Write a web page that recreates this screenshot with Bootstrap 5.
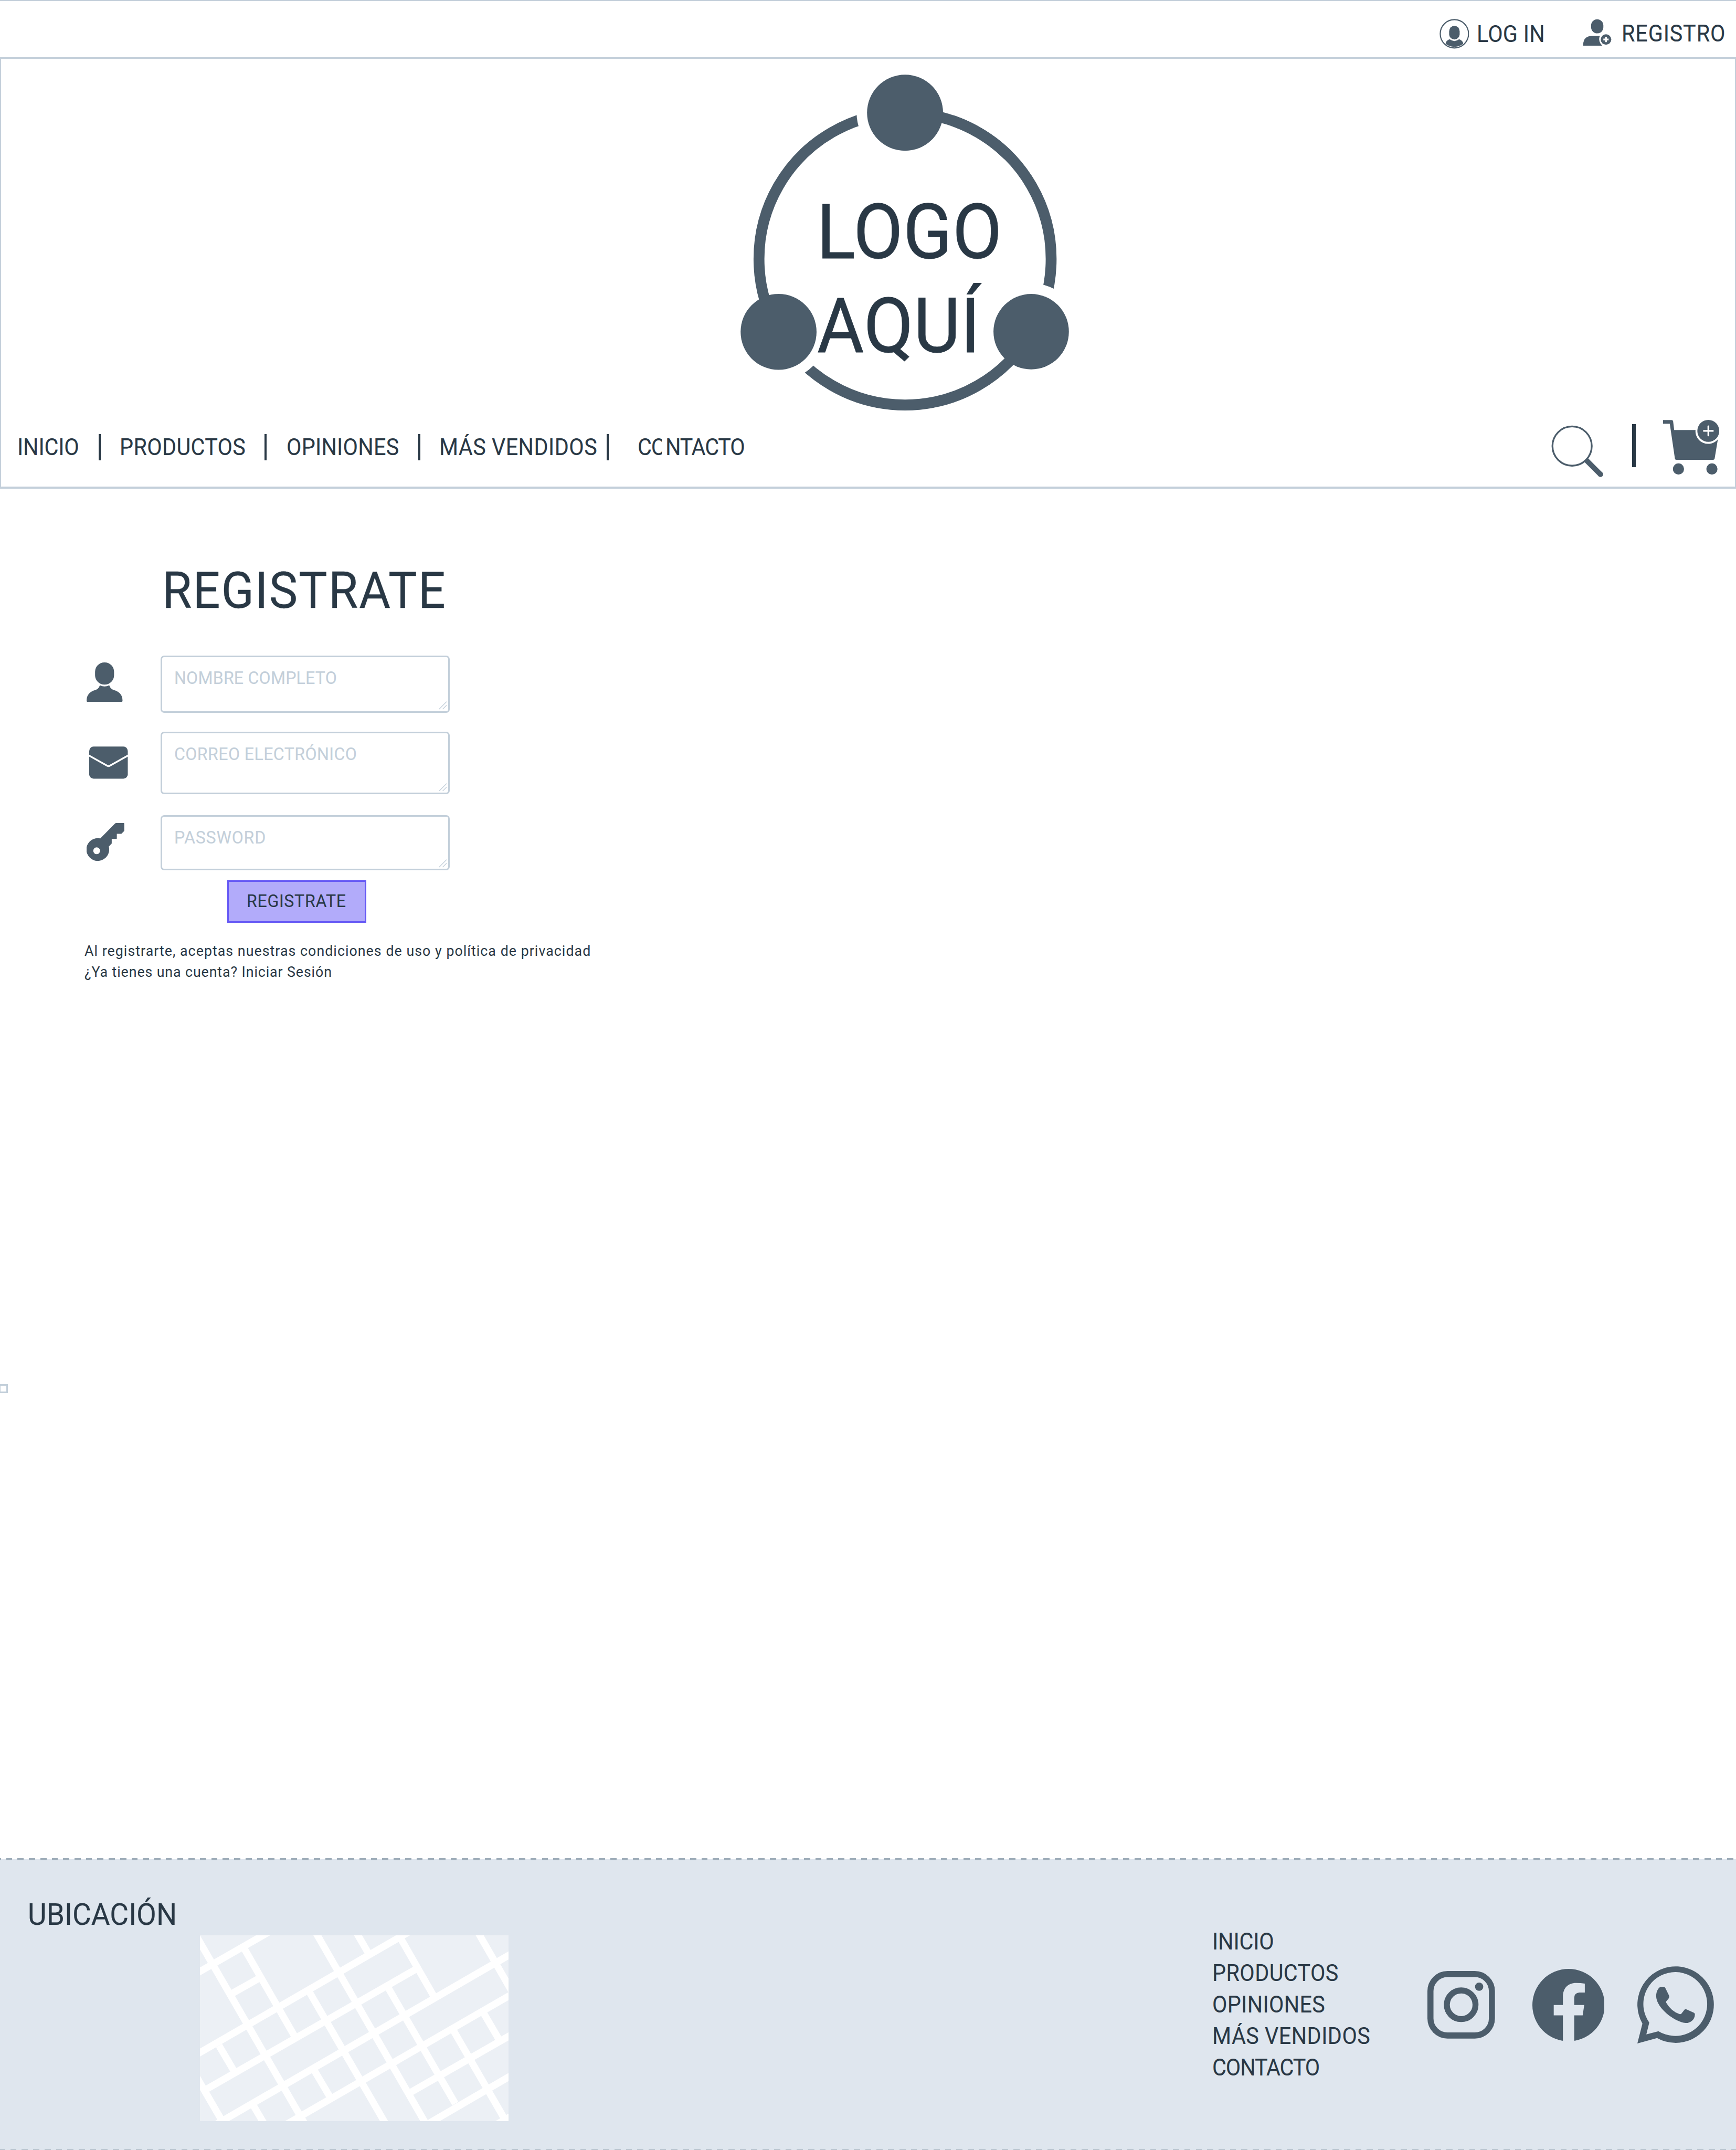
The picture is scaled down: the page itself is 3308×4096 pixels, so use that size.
<!DOCTYPE html>
<html lang="es">
<head>
<meta charset="utf-8">
<title>Registro</title>
<meta name="viewport" content="width=device-width, initial-scale=1">
<link rel="stylesheet" href="https://cdn.jsdelivr.net/npm/bootstrap@5.3.0/dist/css/bootstrap.min.css">
<style>
:root{--ink:#293845;--slate:#4c5d6b;--line:#c3cfda;--mist:#dfe6ee}
html{font-size:8.3535px;overflow:hidden}
body{font-family:Roboto,"Liberation Sans",sans-serif;color:var(--ink);font-size:5.207rem;line-height:1;height:490.4rem;background:#fff}
svg{display:block;flex:none;fill:var(--slate)}
a{color:inherit;text-decoration:none}
/* condensed lettering */
.din{display:inline-block;white-space:nowrap;line-height:1;transform:translateY(.13rem) scaleX(.95);transform-origin:0 0;-webkit-text-stroke:.003em currentColor}
.topbar{height:13.4rem;border-top:.24rem solid var(--line);border-bottom:.4rem solid var(--line)}
.topbar svg{margin-top:4.1rem}
.t-login{margin:4.93rem 0 0 1.75rem;width:24.25rem;letter-spacing:.031rem}
.t-reg{margin:4.75rem 0 0 2.16rem;width:26.14rem;letter-spacing:.108rem}
.banner{height:98rem;border:solid var(--line);border-width:0 .24rem .48rem;display:flow-root}
.logo{width:77rem;height:79rem;margin:2.6rem 0 0 167.7rem}
.logo text{fill:var(--ink);font-size:172.6px;letter-spacing:.7px;stroke:var(--ink);stroke-width:1}
.mainnav{height:16rem}
.menu{height:14rem;padding-left:3.76rem}
.menu li{flex:none;height:5.9rem;border-right:.48rem solid var(--ink);display:flex;align-items:center}
.menu li:nth-child(1){width:18.93rem;letter-spacing:-.02rem}
.menu li:nth-child(2){width:37.94rem;padding-left:4.33rem;letter-spacing:.042rem}
.menu li:nth-child(3){width:35.02rem;padding-left:4.46rem;letter-spacing:.029rem}
.menu li:nth-child(4){width:43rem;padding-left:4.33rem;letter-spacing:.056rem}
.menu li:nth-child(5){border:0;padding-left:6.61rem;letter-spacing:-.146rem;position:relative}
.menu li:nth-child(5)::after{content:"";position:absolute;left:12.1rem;top:0;width:.85rem;height:100%;background:#fff}
.tools{padding-right:3.57rem}
.i-search{width:12rem;height:11.93rem;margin-top:1.93rem}
.i-bar{width:.87rem;height:9.9rem;background:var(--ink);margin:1.7rem 6.23rem 0 6.37rem}
.i-cart{width:12.84rem;height:12.47rem;margin-top:.78rem}
.page{height:312.6rem;padding:17.4rem 0 0 19.3rem}
.title{font-size:11.55rem;letter-spacing:.246rem;font-weight:400;margin:0 0 9.16rem 17.68rem;line-height:1}
.slot{width:17.36rem}
.box{width:65.9rem;height:100%;border:.4rem solid var(--line);border-radius:.8rem;padding:2.6rem 0 0 2.69rem;font-size:4.05rem;line-height:1;color:var(--line);position:relative;background:#fff}
.box .grip{position:absolute;right:.25rem;bottom:.3rem;width:1.9rem;height:1.9rem;stroke:var(--line);stroke-width:1.6;fill:none}
.f1{height:13rem;margin-bottom:4.4rem;letter-spacing:.024rem}
.f2{height:14.2rem;margin-bottom:4.8rem;letter-spacing:.051rem}
.f3{height:12.6rem;letter-spacing:.099rem}
.f1 svg.ic{width:8.2rem;height:9rem;margin:1.6rem 0 0 .5rem}
.f2 svg.ic{width:8.8rem;height:7.4rem;margin:3.3rem 0 0 1.1rem}
.f3 svg.ic{width:8.6rem;height:8.6rem;margin:1.8rem 0 0 .5rem}
.go{width:31.8rem;height:9.8rem;margin:2.2rem 0 0 32.5rem;padding:0 0 .3rem 4.05rem;border:.4rem solid #6659f5;border-radius:0;background:#b2abfa;color:var(--ink);font-size:4.05rem;line-height:1;letter-spacing:.084rem}
.terms{margin:3.86rem 0 91.8rem;font-size:3.375rem;letter-spacing:.13rem;line-height:4.77rem}
.terms p{margin:0;height:4.77rem}
.terms p+p{letter-spacing:.112rem}
.terms .din{line-height:4.77rem;-webkit-text-stroke:0}
.tick{width:2rem;height:2rem;border:.4rem solid var(--line);margin-left:-19.5rem}
.foot{height:66.4rem;background:var(--mist);position:relative;padding-left:6.3rem}
.foot::before,.foot::after{content:"";position:absolute;right:0;height:.4rem;background:repeating-linear-gradient(90deg,#9eadb9 0 1.4rem,transparent 1.4rem 2.6rem)}
.foot::before{top:-.2rem;left:-1.2rem}
.foot::after{bottom:-.2rem;left:-.2rem}
.place{width:39.3rem;font-size:6.93rem;letter-spacing:.003rem;margin:9.06rem 0 0;font-weight:400;line-height:1}
.map{width:70.4rem;height:42.4rem;margin-top:17.4rem;background:#ecf0f5;stroke:#fff;stroke-width:16;fill:none}
.links{width:49.1rem;margin:15.19rem 0 0 160.56rem}
.links li{height:7.2rem;line-height:7.2rem}
.links .din{line-height:7.2rem}
.links li:nth-child(1){letter-spacing:-.02rem}
.links li:nth-child(2){letter-spacing:.05rem}
.links li:nth-child(3){letter-spacing:.04rem}
.links li:nth-child(4){letter-spacing:.057rem}
.links li:nth-child(5){letter-spacing:-.135rem}
.ig{width:15.4rem;height:15.4rem;margin:25.5rem 8.44rem 0 0}
.fb{width:16.5rem;height:16.5rem;margin:25rem 7.46rem 0 0}
.wa{width:17.6rem;height:17.6rem;margin-top:24.4rem}
</style>
</head>
<body class="overflow-hidden">
<header>
  <div class="topbar d-flex justify-content-end align-items-start">
    <a href="#" class="d-flex">
      <svg style="width:6.8rem;height:6.8rem" viewBox="3283 43 68 68"><circle cx="3317" cy="77" r="32.3" fill="none" stroke="#4c5d6b" stroke-width="2.6"/><rect x="3305" y="59" width="24" height="31" rx="12"/><path d="M3297 100Q3297 92 3308.500 88.500Q3317 96 3325.500 88.500Q3337 92 3337 100A33 33 0 0 1 3297 100Z"/><path d="M3307 88.500Q3317 96 3327 88.500" fill="none" stroke="#fff" stroke-width="2.6"/></svg>
      <span class="din t-login">LOG IN</span>
    </a>
    <a href="#" class="d-flex">
      <svg style="width:6.6rem;height:6.2rem" viewBox="3611 43 66 62"><rect x="3630" y="44" width="28" height="32" rx="14"/><path d="M3612 104V101Q3613 82 3632 82H3650Q3645 94 3655.500 104Z"/><circle cx="3664" cy="90" r="12"/><path d="M3658 90h12M3664 84v12" stroke="#fff" stroke-width="4"/></svg>
      <span class="din t-reg">REGISTRO</span>
    </a>
  </div>
  <div class="banner">
    <svg class="logo" viewBox="1680 160 770 790">
      <g fill="none" stroke="#4c5d6b" stroke-width="24.8">
        <path d="M2065 256.800A333.200 333.200 0 0 1 2353.600 756.600"/>
        <circle cx="2352.700" cy="756" r="110.500" fill="#fff" stroke="none"/>
        <path d="M2353.600 756.600A333.200 333.200 0 0 1 1776.400 756.600"/>
        <circle cx="1776.500" cy="756.500" r="110.500" fill="#fff" stroke="none"/>
        <path d="M1776.400 756.600A333.200 333.200 0 0 1 2065 256.800"/>
        <circle cx="2065" cy="256.700" r="110.500" fill="#fff" stroke="none"/>
        <path d="M2065 256.800A333.200 333.200 0 0 1 2300.600 354.400"/>
      </g>
      <circle cx="2065" cy="256.700" r="86.700"/><circle cx="1776.500" cy="756.500" r="86.600"/><circle cx="2352.700" cy="756" r="86"/>
      <text transform="translate(1863.500 588) scale(.95 1)">LOGO</text>
      <text transform="translate(1864.500 803.400) scale(.95 1)">AQUÍ</text>
    </svg>
    <nav class="mainnav d-flex justify-content-between align-items-start">
      <ul class="menu list-unstyled d-flex align-items-center mb-0">
        <li><a href="#" class="din">INICIO</a></li>
        <li><a href="#" class="din">PRODUCTOS</a></li>
        <li><a href="#" class="din">OPINIONES</a></li>
        <li><a href="#" class="din">MÁS VENDIDOS</a></li>
        <li><a href="#" class="din">CONTACTO</a></li>
      </ul>
      <div class="tools d-flex align-items-start">
        <svg class="i-search" viewBox="178 148 360 358"><circle cx="320.500" cy="291" r="134.500" fill="none" stroke="#4c5d6b" stroke-width="12"/><path d="M416 386L515 485" stroke="#4c5d6b" stroke-width="36"/><circle cx="515" cy="485" r="18"/></svg>
        <div class="i-bar"></div>
        <svg class="i-cart" viewBox="942 113 385 374"><path d="M942 114H1000Q1010 114 1011 124L1018 182H1164A87 87 0 0 0 1317 246L1295 377Q1293 386 1284 386H1034Q1024 386 1023 377L988 139H942Z"/><circle cx="1251.500" cy="188" r="75"/><path d="M1221 188h62M1252 157v62" stroke="#fff" stroke-width="12" stroke-linecap="round"/><circle cx="1047.500" cy="448.500" r="38"/><circle cx="1276.500" cy="448.500" r="38"/></svg>
      </div>
    </nav>
  </div>
</header>

<main class="page">
  <h1 class="title"><span class="din">REGISTRATE</span></h1>
  <form>
    <div class="f1 d-flex align-items-start">
      <div class="slot"><svg class="ic" viewBox="54 66 246 270"><rect x="112" y="66" width="130" height="152" rx="64"/><path d="M145 222Q177 238 209 222Q217 247 239 255Q300 272 300 328Q300 336 293 336H61Q54 336 54 328Q54 272 115 255Q137 247 145 222Z"/></svg></div>
      <div class="box"><span class="din">NOMBRE COMPLETO</span><svg class="grip" viewBox="0 0 19 19"><path d="M1 18L18 1M9 18L18 9"/></svg></div>
    </div>
    <div class="f2 d-flex align-items-start">
      <div class="slot"><svg class="ic" viewBox="72 640 264 220"><rect x="72" y="640" width="264" height="220" rx="30"/><path d="M68 700L196 772Q204 776 212 772L340 700" fill="none" stroke="#fff" stroke-width="12"/></svg></div>
      <div class="box"><span class="din">CORREO ELECTRÓNICO</span><svg class="grip" viewBox="0 0 19 19"><path d="M1 18L18 1M9 18L18 9"/></svg></div>
    </div>
    <div class="f3 d-flex align-items-start">
      <div class="slot"><svg class="ic" viewBox="54 1164 258 258"><path fill-rule="evenodd" d="M148 1269L249 1167Q252 1164 256 1164H308Q312 1164 312 1168V1218L292 1238H261V1269Q261 1273 257 1273H226V1304L206 1325A78 78 0 1 1 148 1269ZM123 1330A23.500 23.500 0 1 0 123 1377A23.500 23.500 0 1 0 123 1330Z"/></svg></div>
      <div class="box"><span class="din">PASSWORD</span><svg class="grip" viewBox="0 0 19 19"><path d="M1 18L18 1M9 18L18 9"/></svg></div>
    </div>
    <button type="button" class="go d-flex align-items-center"><span class="din">REGISTRATE</span></button>
  </form>
  <div class="terms">
    <p><span class="din">Al registrarte, aceptas nuestras condiciones de uso y política de privacidad</span></p>
    <p><a href="#" class="din">¿Ya tienes una cuenta? Iniciar Sesión</a></p>
  </div>
  <div class="tick"></div>
</main>

<footer class="foot d-flex align-items-start">
  <h2 class="place"><span class="din">UBICACIÓN</span></h2>
  <svg class="map" viewBox="0 0 704 424"><path d="M-14 90.400L158 -8M-14 275.500L477 -8M16.800 349.900L492.800 77.200M35.800 432L718 37.700M195.800 432L718 130.600M481.400 357.700L718 222.300M517 432L718 315.100M675.500 432L718 408M75.800 131.300L132 99.700M-13.800 -8L240.300 432M102.500 32.700L215.800 229.900M263.300 -8L516.600 432M355.900 -8L383.400 39.300M458.400 8L532.600 137.400M633.600 -8L712 128.600M251 131.700L424.700 432M430.100 120.800L582.400 383.900M648.200 179.300L681.100 235.600M579.300 219L702.500 432M43.600 251.700L76.500 307.500M-8 322.400L55 431M261.700 309.700L295.400 366.400M123.200 390.400L147.700 432"/></svg>
  <ul class="links list-unstyled mb-0">
    <li><a href="#" class="din">INICIO</a></li>
    <li><a href="#" class="din">PRODUCTOS</a></li>
    <li><a href="#" class="din">OPINIONES</a></li>
    <li><a href="#" class="din">MÁS VENDIDOS</a></li>
    <li><a href="#" class="din">CONTACTO</a></li>
  </ul>
  <svg class="ig" viewBox="0 0 154 154"><rect x="6.900" y="6.900" width="140.200" height="140.200" rx="39" fill="none" stroke="#4c5d6b" stroke-width="13.800"/><circle cx="77" cy="77" r="32.700" fill="none" stroke="#4c5d6b" stroke-width="13.600"/><circle cx="118" cy="35.800" r="9.400"/></svg>
  <svg class="fb" viewBox="0 0 165 165"><circle cx="82.500" cy="82.500" r="82.500"/><path fill="#dfe6ee" d="M69.600 166V106H48.700V82.300H69.600V64C69.600 43 82 32 99.600 32Q110 32 119.600 33.500V54H107Q95.500 55 95.500 66V82.300H118.300L114.700 106H95.500V166Z"/></svg>
  <svg class="wa" viewBox="0 0 176 176"><path fill-rule="evenodd" d="M11.600 130.700A87.200 87.200 0 1 1 45 163.700L0 176ZM27.200 128.300L20.500 155.300L48.200 148A72.800 72.800 0 1 0 27.200 128.300Z"/><path d="M53 47H60Q63 47 64.500 51L72 66Q74 70 71 74L66 80Q65 82 66.500 84Q77 102 96 109Q99 110 100.500 108L107.500 99Q110 97 112.500 98.500L129 106Q131.500 107.500 131.300 110C131 123 119 130 110 129.300C85 127 43 95 43 67.700C43 57 48 49 53 47Z"/></svg>
</footer>
<script src="https://cdn.jsdelivr.net/npm/bootstrap@5.3.0/dist/js/bootstrap.bundle.min.js"></script>
</body>
</html>
